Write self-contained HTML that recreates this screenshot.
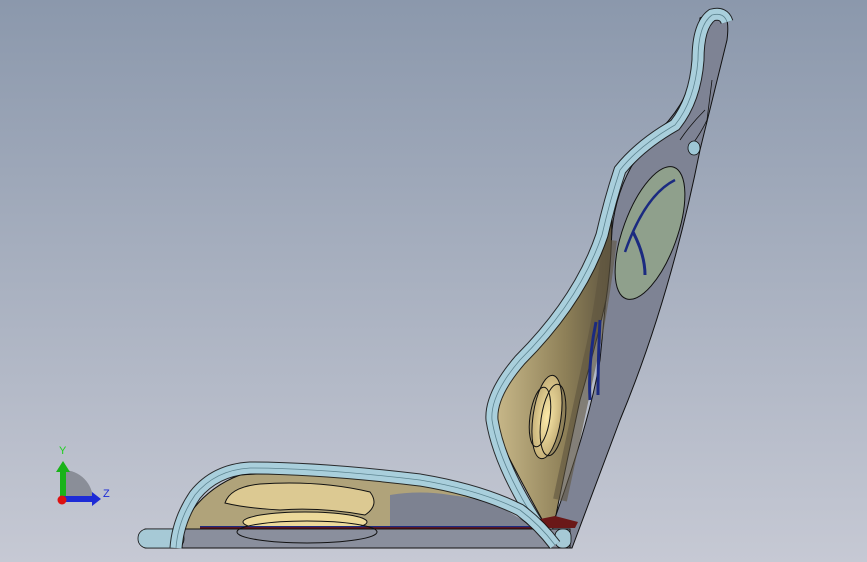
<!DOCTYPE html>
<html><head><style>
html,body{margin:0;padding:0;width:867px;height:562px;overflow:hidden}
svg{display:block}
</style></head><body>
<svg width="867" height="562" viewBox="0 0 867 562" xmlns="http://www.w3.org/2000/svg">
<defs>
<linearGradient id="bg" x1="0" y1="0" x2="0" y2="1">
<stop offset="0" stop-color="#8b98ac"/><stop offset="1" stop-color="#c6c9d4"/>
</linearGradient>
<linearGradient id="tan" x1="0" y1="0" x2="1" y2="0">
<stop offset="0" stop-color="#c9b98a"/><stop offset="0.6" stop-color="#8e8058"/><stop offset="1" stop-color="#5e5540"/>
</linearGradient>
<radialGradient id="glow" cx="0.5" cy="0.5" r="0.5">
<stop offset="0" stop-color="#fbe9a8"/><stop offset="1" stop-color="#c7b27a"/>
</radialGradient>
</defs>
<rect width="867" height="562" fill="url(#bg)"/>

<!-- back gray panel -->
<path d="M700,18 Q712,12 726,18 Q729,24 727,40 L700,150 Q670,300 620,420 L572,548 L548,548 L556,515 Q590,420 600,360 Q606,300 612,230 Q618,170 660,130 Q690,100 697,60 Z" fill="#7e8394" stroke="#111" stroke-width="1"/>

<!-- tan back region -->
<path d="M496,430 Q488,395 520,355 Q575,300 600,250 Q608,225 612,215 Q612,260 606,300 Q596,345 580,400 Q565,470 556,515 L548,530 Q520,480 500,440 Z" fill="url(#tan)" stroke="#111" stroke-width="1"/>
<path d="M610,240 Q600,320 590,360 Q575,430 560,500" fill="none" stroke="#5f5540" stroke-width="14" opacity="0.6"/>

<!-- back recess ellipse -->
<ellipse cx="650" cy="233" rx="27" ry="70" transform="rotate(20 650 233)" fill="#8fa08c" stroke="#111" stroke-width="1"/>
<path d="M625,252 Q645,195 675,180" fill="none" stroke="#1b2a80" stroke-width="2.5"/>
<path d="M633,232 Q645,255 645,275" fill="none" stroke="#1b2a80" stroke-width="3"/>
<path d="M596,322 Q588,360 590,400 M600,320 Q598,360 598,395" fill="none" stroke="#1b2a80" stroke-width="3"/>

<!-- lumbar ovals -->
<ellipse cx="547" cy="417" rx="14" ry="42" transform="rotate(8 547 417)" fill="url(#glow)" stroke="#111" stroke-width="1"/>
<ellipse cx="553" cy="420" rx="12" ry="36" transform="rotate(8 553 420)" fill="none" stroke="#111" stroke-width="1"/>
<ellipse cx="540" cy="417" rx="10" ry="30" transform="rotate(8 540 417)" fill="none" stroke="#111" stroke-width="1"/>

<!-- back pad light blue band -->
<g fill="none">
<path id="bp" d="M548,540 Q500,470 492,420 Q490,395 520,360 Q580,300 602,235 Q610,200 620,170 Q640,145 675,125 Q695,100 698,60 Q698,25 712,15 Q724,12 727,22" stroke="#111" stroke-width="13" opacity="0.85"/>
<path d="M548,540 Q500,470 492,420 Q490,395 520,360 Q580,300 602,235 Q610,200 620,170 Q640,145 675,125 Q695,100 698,60 Q698,25 712,15 Q724,12 727,22" stroke="#a9cfdc" stroke-width="11"/>
<path d="M548,540 Q500,470 492,420 Q490,395 520,360 Q580,300 602,235 Q610,200 620,170 Q640,145 675,125 Q695,100 698,60 Q698,25 712,15 Q724,12 727,22" stroke="#5d8490" stroke-width="0.8"/>
</g>
<path d="M688,150 Q700,135 707,120 L712,80 M680,140 Q690,125 705,110" fill="none" stroke="#111" stroke-width="0.8"/>
<ellipse cx="694" cy="148" rx="6" ry="7" fill="#9ec7d6" stroke="#111" stroke-width="0.8"/>

<!-- seat tan -->
<path d="M180,530 Q200,490 240,475 Q300,470 420,483 Q480,495 530,525 L540,530 Z" fill="#b0a37a" stroke="#111" stroke-width="1"/>
<path d="M390,495 Q420,490 450,495 Q500,500 532,528 L390,528 Z" fill="#7d8291"/>
<path d="M225,503 Q230,487 260,484 Q320,480 370,492 Q380,505 365,515 Q320,507 280,510 Q245,508 225,503 Z" fill="#dcc992" stroke="#111" stroke-width="1"/>
<ellipse cx="305" cy="522" rx="62" ry="10" fill="#ecd99a" stroke="#111" stroke-width="1"/>
<path d="M200,527 L540,527" stroke="#1b2a80" stroke-width="2"/>
<path d="M200,528 L545,528" stroke="#6a1010" stroke-width="1.5"/>
<path d="M535,520 L555,516 L578,522 L575,528 L540,528 Z" fill="#6a1818"/>

<!-- seat base slab -->
<rect x="145" y="529" width="425" height="19" fill="#8a8f9d" stroke="#111" stroke-width="1"/>
<ellipse cx="307" cy="532" rx="70" ry="11" fill="none" stroke="#111" stroke-width="1"/>
<rect x="138" y="529" width="46" height="19" rx="9" fill="#a6c9d6" stroke="#111" stroke-width="0.8"/>
<rect x="555" y="529" width="16" height="19" rx="7" fill="#a6c9d6" stroke="#111" stroke-width="0.8"/>

<!-- seat pad band -->
<path d="M176,548 Q178,520 195,495 Q215,470 250,468 Q320,468 420,480 Q480,490 520,510 Q540,525 555,545" fill="none" stroke="#111" stroke-width="13" opacity="0.85"/>
<path d="M176,548 Q178,520 195,495 Q215,470 250,468 Q320,468 420,480 Q480,490 520,510 Q540,525 555,545" fill="none" stroke="#a9cfdc" stroke-width="11"/>
<path d="M176,548 Q178,520 195,495 Q215,470 250,468 Q320,468 420,480 Q480,490 520,510 Q540,525 555,545" fill="none" stroke="#5d8490" stroke-width="0.8"/>

<!-- axis triad -->
<path d="M63,500 L63,470 A30,30 0 0 1 93,500 Z" fill="#8a8e98"/>
<rect x="60" y="470" width="6" height="30" fill="#19b319"/>
<polygon points="56,472 63,461 70,472" fill="#19b319"/>
<rect x="63" y="496" width="30" height="6" fill="#1d2bd6"/>
<polygon points="92,492 101,499 92,506" fill="#1d2bd6"/>
<circle cx="62" cy="500" r="4.5" fill="#d11"/>
<text x="59" y="454" font-family="Liberation Sans, sans-serif" font-size="11" fill="#1fd01f">Y</text>
<text x="103" y="497" font-family="Liberation Sans, sans-serif" font-size="11" fill="#1d2bd6">Z</text>
</svg>
</body></html>
